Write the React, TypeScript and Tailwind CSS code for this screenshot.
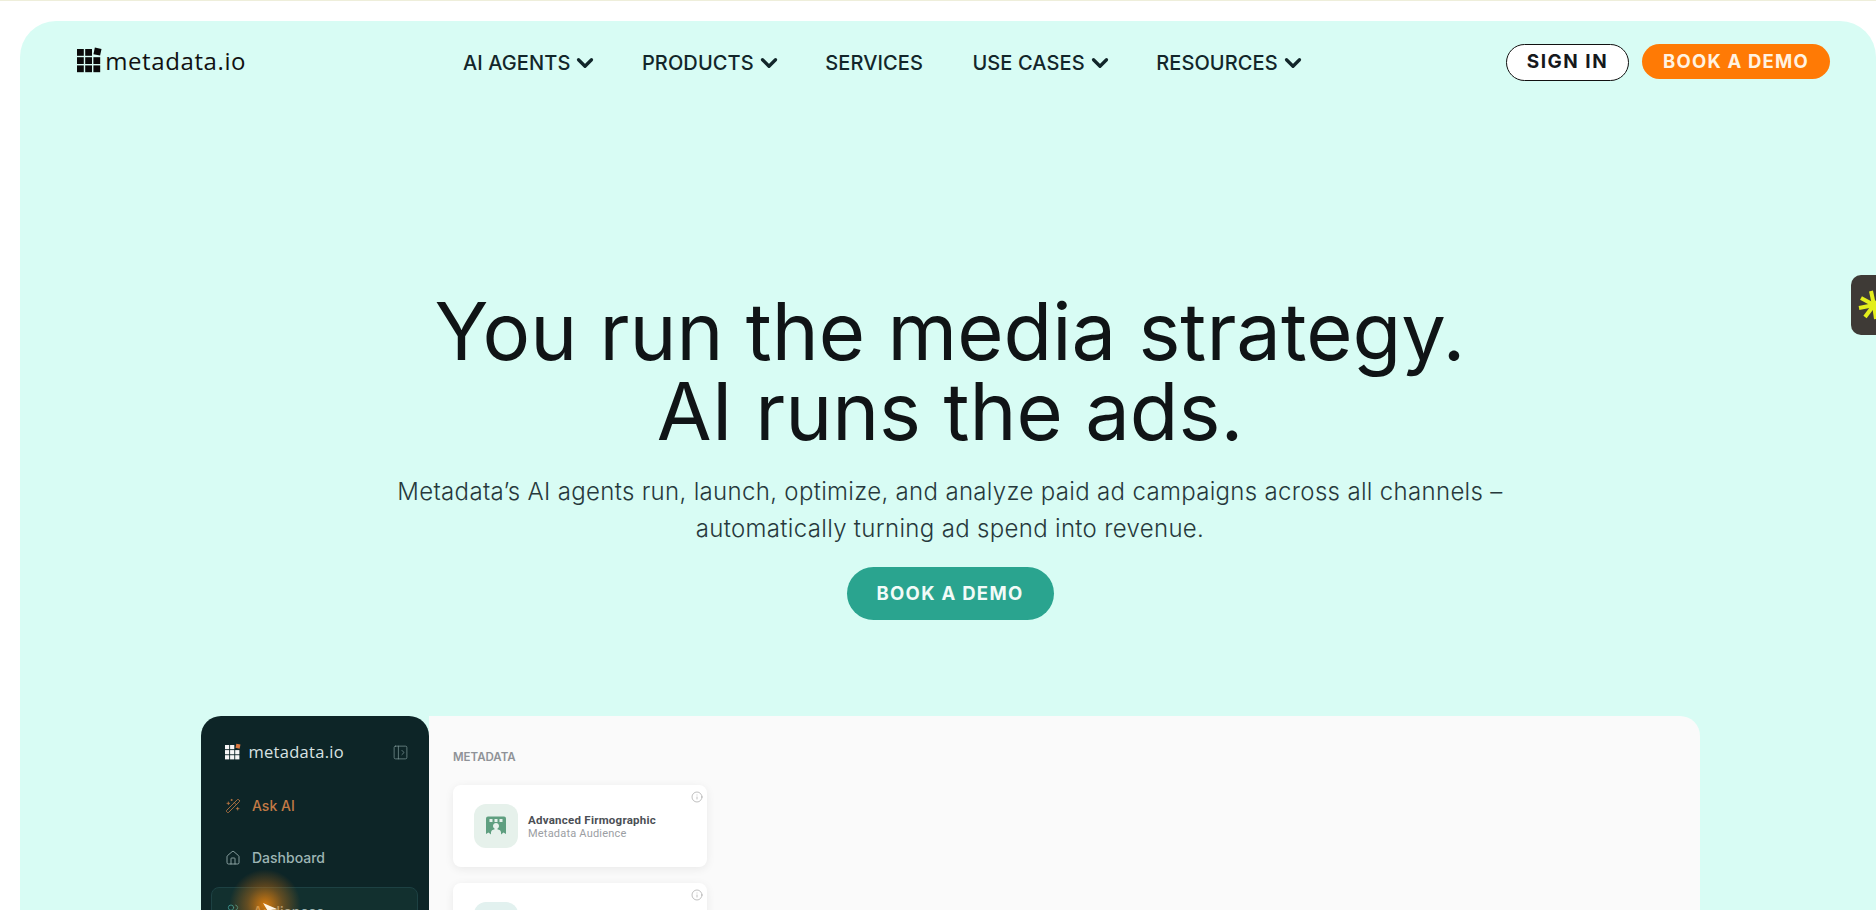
import { ChevronDown, House, Info, PanelLeftOpen, Users, WandSparkles } from 'lucide-react';

const navItems = [
  { label: 'AI AGENTS', caret: true },
  { label: 'PRODUCTS', caret: true },
  { label: 'SERVICES', caret: false },
  { label: 'USE CASES', caret: true },
  { label: 'RESOURCES', caret: true },
];

function LogoGrid({ cell, gap, color, accent }: { cell: number; gap: number; color: string; accent: string }) {
  const step = cell + gap;
  const squares = [];
  for (let row = 0; row < 3; row++) {
    for (let col = 0; col < 3; col++) {
      if (row === 0 && col === 2) continue;
      squares.push(<rect key={`${row}-${col}`} x={col * step} y={row * step} width={cell} height={cell} fill={color} />);
    }
  }
  const size = step * 3 - gap;
  return (
    <svg width={size} height={size} viewBox={`0 0 ${size} ${size}`} className="overflow-visible shrink-0">
      {squares}
      <rect x={2 * step} y={0} width={cell} height={cell} fill={accent} transform={`rotate(12 ${2 * step + cell / 2} ${cell / 2}) translate(0.5 -1)`} />
    </svg>
  );
}

function AudienceIcon() {
  return (
    <svg width="22" height="22" viewBox="0 0 22 22">
      <path d="M1 3.5a2 2 0 0 1 2-2h16a2 2 0 0 1 2 2V19l-2.500-1.500L16 19.500v-2.500a3 3 0 0 0-3-2.500h-.5v-1a3 3 0 1 0-3 0v1H9a3 3 0 0 0-3 2.500v2.500L3.500 17.500 1 19z" fill="#5f9f80" />
      <rect x="4.500" y="4" width="3" height="3" fill="#e6f1eb" />
      <rect x="9.500" y="4" width="3" height="3" fill="#e6f1eb" />
      <rect x="14.500" y="4" width="3" height="3" fill="#e6f1eb" />
    </svg>
  );
}

function AudienceCard({ title, subtitle, tint }: { title: string; subtitle: string; tint: string }) {
  return (
    <div className="relative w-[254px] h-[82px] shrink-0 rounded-[8px] bg-white shadow-[0_2px_10px_rgba(0,0,0,0.07)] flex items-center pl-[21px] gap-[10px]">
      <Info size={12} strokeWidth={1.25} className="absolute right-[4px] top-[6px] text-[#9a9a9a]" />
      <div className={`w-[44px] h-[44px] rounded-[12px] flex items-center justify-center ${tint}`}>
        <AudienceIcon />
      </div>
      <div className="pt-[2px] font-['Roboto',sans-serif] leading-[14px]">
        <div className="text-[11.500px] font-bold tracking-[0.25px] text-[#4b4f55]">{title}</div>
        <div className="text-[11px] text-[#9b9ea3] tracking-[0.2px]">{subtitle}</div>
      </div>
    </div>
  );
}

export default function App() {
  return (
    <div className="relative h-[910px] w-full overflow-hidden bg-white font-['Inter',sans-serif]">
      <div className="h-px bg-[#eeeeda]" />
      <div className="mt-[20px] ml-[20px] h-[900px] rounded-t-[36px] bg-[#d8fcf4] flex flex-col">
        {/* Header */}
        <header className="flex items-start pl-[57px] pt-[23px]">
          <div className="flex items-center gap-[5px] pt-[5px] w-[168px]">
            <LogoGrid cell={6.8} gap={1.4} color="#0a0a0a" accent="#0a0a0a" />
            <span className="font-['Open_Sans',sans-serif] text-[24px] leading-[24px] tracking-[0.6px] text-[#111]">metadata.io</span>
          </div>
          <nav className="ml-[218px] flex items-center gap-[49.500px] pt-[6px]">
            {navItems.map((item) => (
              <div key={item.label} className="flex items-center gap-[8px] text-[20px] leading-[24px] font-medium tracking-[0.1px] text-[#12262a]">
                <span>{item.label}</span>
                {item.caret && <ChevronDown size={26} strokeWidth={3} className="-mx-[6px]" />}
              </div>
            ))}
          </nav>
          <div className="ml-auto mr-[46px] flex items-start gap-[13px]">
            <button className="w-[123px] h-[37px] rounded-full border border-[#111] bg-white text-[19px] font-bold tracking-[1.5px] text-[#16181c]">SIGN IN</button>
            <button className="w-[188px] h-[35px] rounded-full bg-[#ff7a05] text-[18.500px] font-bold tracking-[1.2px] text-[#fff3e2]">BOOK A DEMO</button>
          </div>
        </header>

        {/* Hero */}
        <section className="mt-[210px] pl-[4px] flex flex-col items-center">
          <h1 className="text-[79.500px] leading-[80px] font-normal text-center text-[#101416]">
            You run the media strategy.<br />AI runs the ads.
          </h1>
          <p className="mt-[22px] text-[24px] leading-[37px] font-light tracking-[0.32px] text-center text-[#27393c]">
            Metadata’s AI agents run, launch, optimize, and analyze paid ad campaigns across all channels –<br />
            automatically turning ad spend into revenue.
          </p>
          <button className="mt-[20px] w-[207px] h-[53px] rounded-full bg-[#2aa48f] text-[18.500px] font-bold tracking-[1.3px] text-[#f2fbf8]">BOOK A DEMO</button>
        </section>

        {/* Product preview */}
        <section className="mt-[96px] ml-[181px] mr-[176px] flex flex-1 min-h-0">
          <aside className="w-[228px] shrink-0 rounded-t-[20px] bg-[#0d2527] pt-[26px] pl-[10px] pr-[11px]">
            <div className="flex items-center justify-between pl-[14px] pr-[9px]">
              <div className="flex items-center gap-[9px]">
                <LogoGrid cell={4.2} gap={0.9} color="#f5f5f5" accent="#d9773f" />
                <span className="font-['Open_Sans',sans-serif] text-[16.500px] leading-[20px] tracking-[0.3px] text-[#d9e2e2]">metadata.io</span>
              </div>
              <PanelLeftOpen size={17} strokeWidth={1} className="text-[#7f9a9a]" />
            </div>
            <div className="mt-[35px] flex items-center gap-[11px] pl-[14px] text-[14px] leading-[18px] font-medium text-[#c27a45]">
              <WandSparkles size={16} strokeWidth={1.25} />
              <span>Ask AI</span>
            </div>
            <div className="mt-[34px] flex items-center gap-[11px] pl-[14px] text-[14px] leading-[18px] font-medium text-[#9db5b4]">
              <House size={16} strokeWidth={1.25} />
              <span>Dashboard</span>
            </div>
            <div className="mt-[20px] h-[60px] rounded-[8px] border border-[#1d4143] bg-[#12302f] flex items-start gap-[12px] pl-[13px] pt-[15px] text-[14px] leading-[18px] font-medium text-[#9db5b4]">
              <Users size={16} strokeWidth={1.25} className="text-[#3e9a93]" />
              <span>Audiences</span>
            </div>
          </aside>
          <div className="flex-1 rounded-tr-[20px] bg-[#fafafa] pl-[24px] pt-[33px]">
            <div className="text-[11.500px] leading-[16px] font-semibold text-[#8f9297]">METADATA</div>
            <div className="mt-[20px] flex flex-col gap-[16px]">
              <AudienceCard title="Advanced Firmographic" subtitle="Metadata Audience" tint="bg-[#e6f1eb]" />
              <AudienceCard title="" subtitle="" tint="bg-[#e2f1ef]" />
            </div>
          </div>
        </section>
      </div>

      {/* Click highlight from the recording */}
      <div className="absolute left-[229px] top-[869px] w-[72px] h-[72px] rounded-full bg-[radial-gradient(circle,rgba(245,135,10,0.85)_0%,rgba(220,120,15,0.4)_35%,rgba(220,120,15,0)_70%)]" />
      <svg className="absolute left-[263px] top-[903px]" width="14" height="10" viewBox="0 0 14 10">
        <path d="M0 0 L14 6 L8 7 L6 10 Z" fill="#fff6e5" />
      </svg>

      {/* Floating widget */}
      <div className="absolute left-[1851px] top-[275px] w-[40px] h-[60px] rounded-[10px] bg-[#3e3a36] flex items-center pl-[7px]">
        <svg width="24" height="32" viewBox="0 0 24 32">
          <g stroke="#e3ee1c" strokeWidth="4">
            <line x1="16" y1="16" x2="13" y2="2" />
            <line x1="16" y1="16" x2="3" y2="9" />
            <line x1="16" y1="16" x2="1" y2="19" />
            <line x1="16" y1="16" x2="7" y2="28" />
            <line x1="16" y1="16" x2="18" y2="30" />
            <line x1="16" y1="16" x2="24" y2="8" />
            <line x1="16" y1="16" x2="24" y2="24" />
          </g>
        </svg>
      </div>
    </div>
  );
}
